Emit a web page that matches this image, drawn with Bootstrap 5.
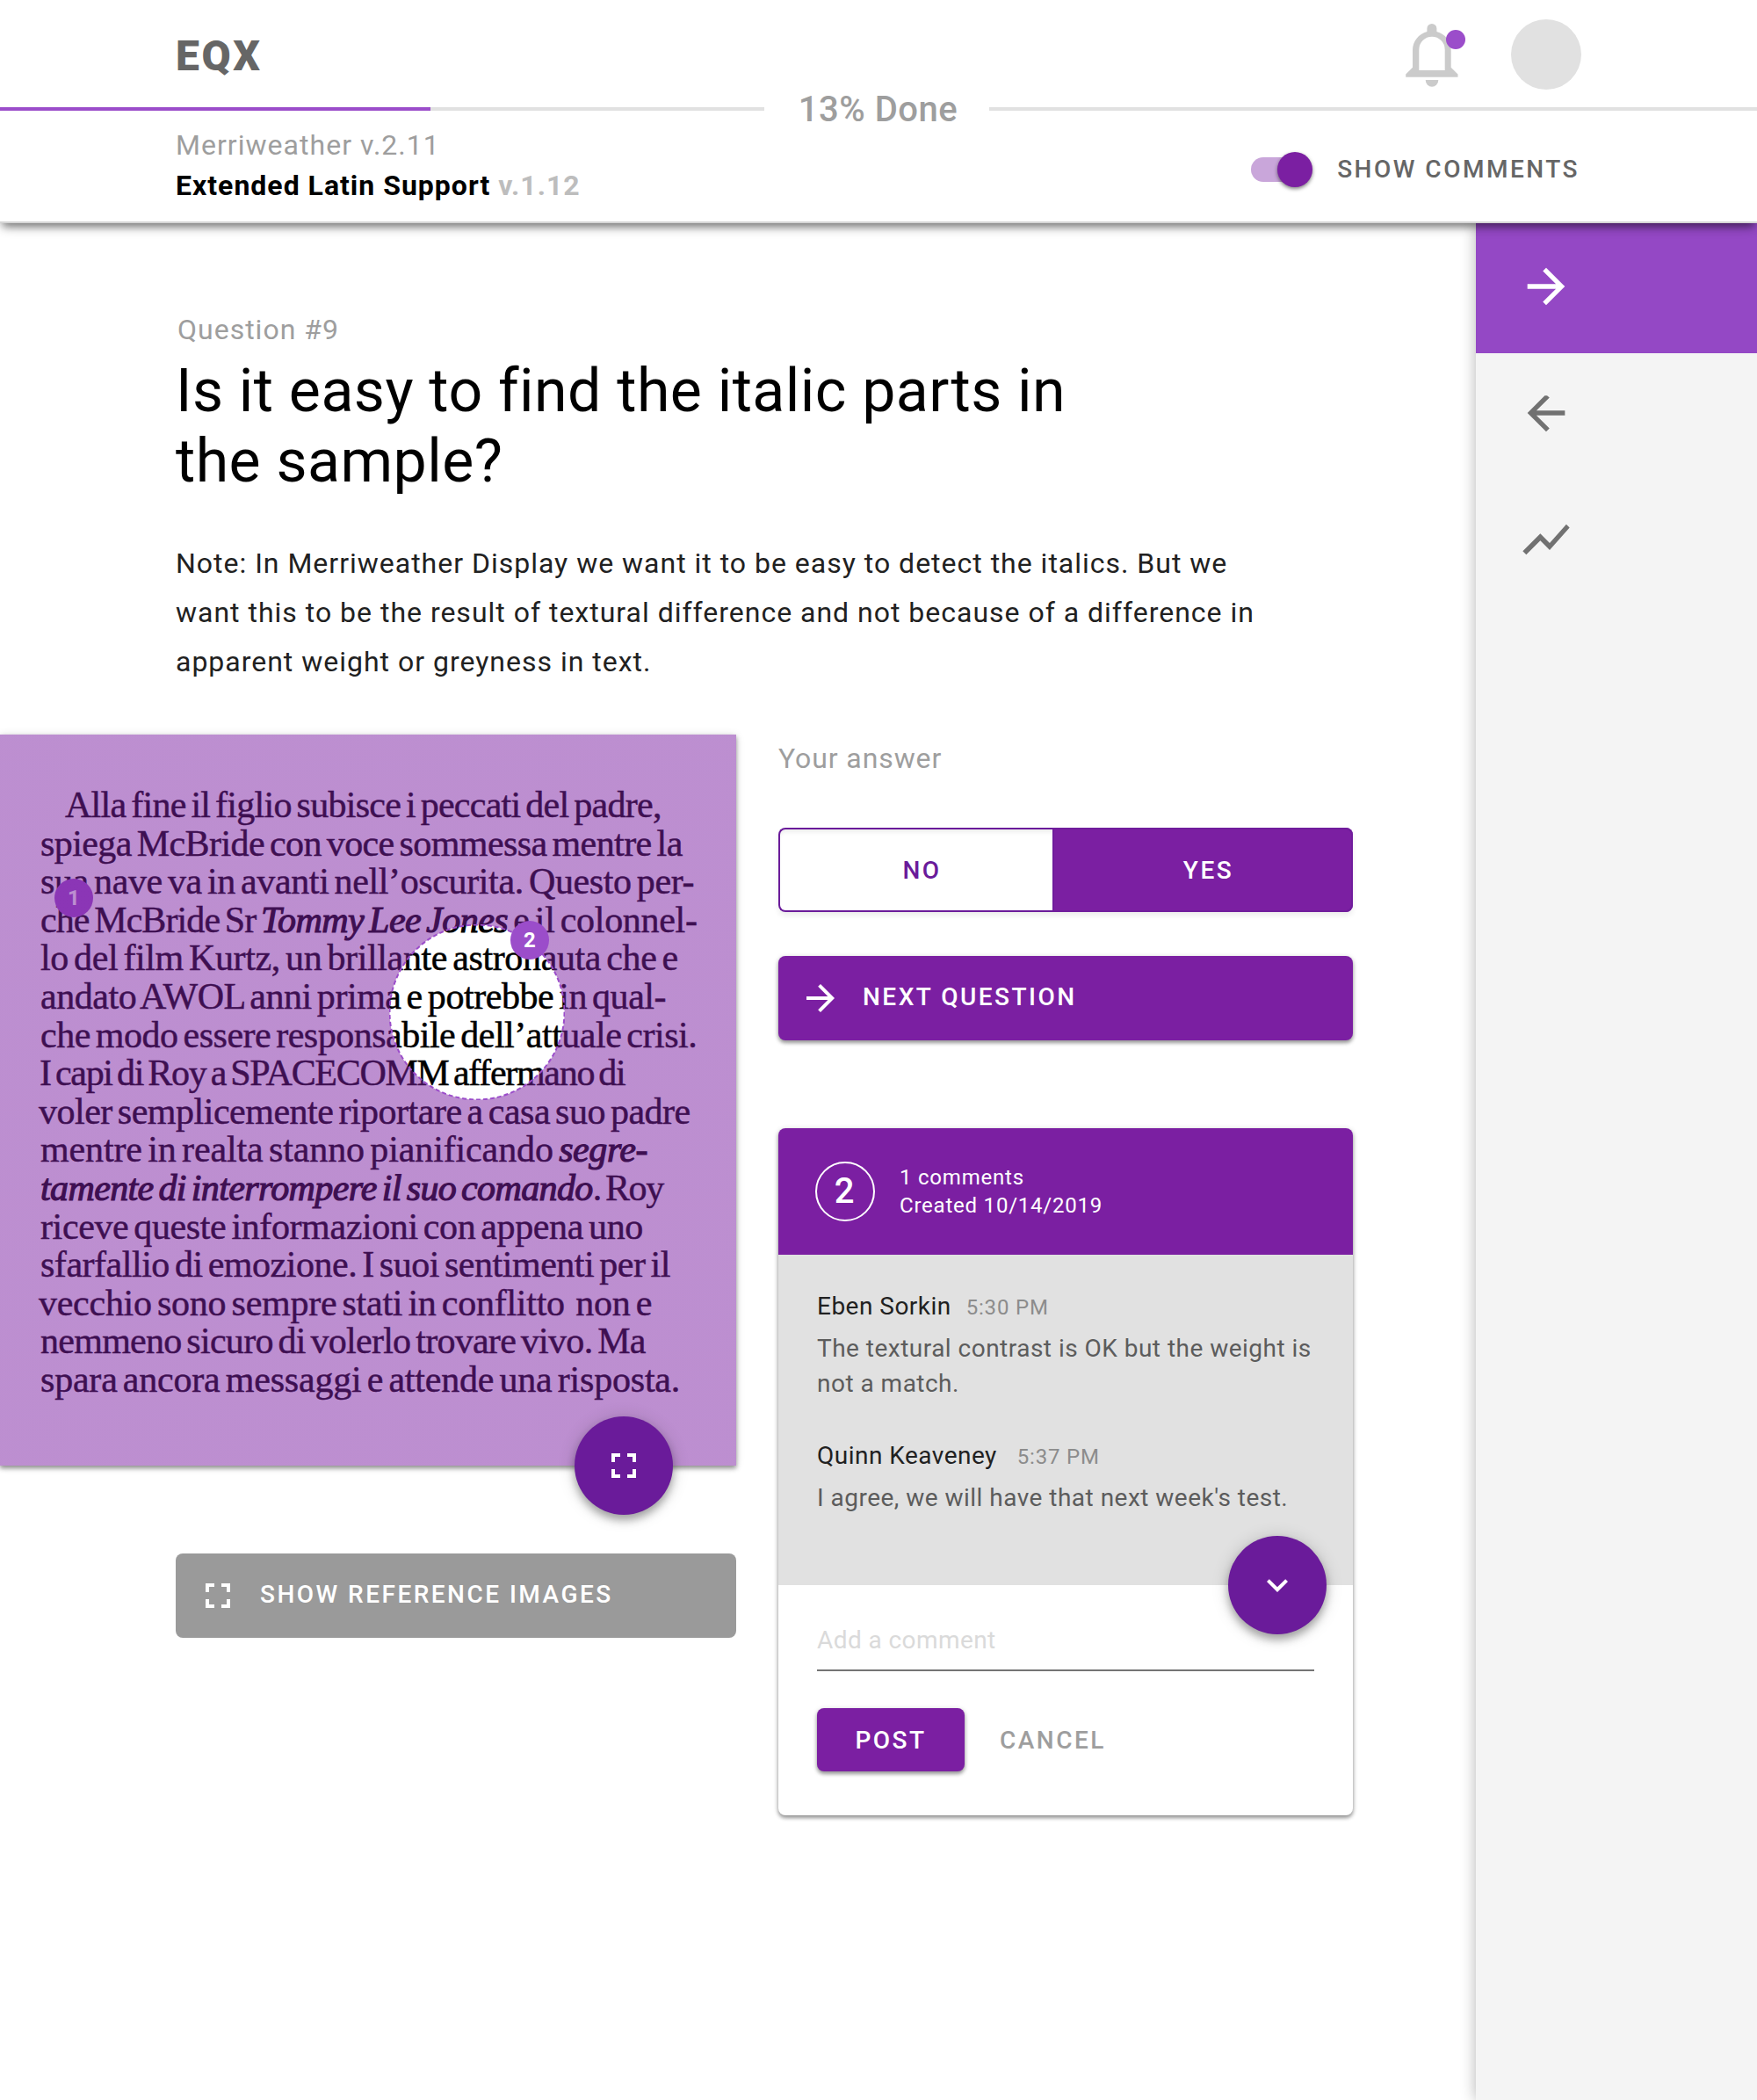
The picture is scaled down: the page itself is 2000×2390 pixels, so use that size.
<!DOCTYPE html>
<html lang="en">
<head>
<meta charset="utf-8">
<meta name="viewport" content="width=device-width, initial-scale=1">
<title>EQX</title>
<link href="https://cdn.jsdelivr.net/npm/bootstrap@5.3.0/dist/css/bootstrap.min.css" rel="stylesheet">
<style>
  :root { --plum: #7b1fa2; --plum-deep: #6a1b9a; --violet: #9b4dca; --violet-nav: #9448c5; --grey-text: #9e9e9e; }
  body { font-family: Roboto, "Liberation Sans", sans-serif; font-size: 32px; letter-spacing: .99px; line-height: 1.5; color: #212121; background: #fff; }
  svg { display: block; flex: none; }

  /* Header */
  .app-header { height: 254px; border-bottom: 2px solid #d6d6d6; z-index: 5; box-shadow: 0 7px 9px -3px rgba(0,0,0,.42), 0 3px 16px -3px rgba(0,0,0,.3); }
  .brand-bar { height: 122px; padding: 2px 200px 0 200px; }
  .brand-name { font-size: 48px; font-weight: 900; letter-spacing: 2.6px; color: #666; padding-top: 3px; line-height: 60px; }
  .avatar { width: 80px; height: 80px; background: #e1e1e1; }
  .brand-tools { gap: 60px; }
  .brand-tools svg { margin-top: 2px; }
  .done-row { height: 4px; }
  .done-track { height: 4px; border-radius: 0; background: #e1e1e1; width: 870px; }
  .done-track .progress-bar { background: var(--violet); width: 490px; }
  .done-track.rest { width: 874px; }
  .done-label { width: 256px; padding: 2px 0 0 3px; font-size: 40px; font-weight: 500; letter-spacing: .5px; color: var(--grey-text); }
  .project-bar { padding: 16px 202px 0 200px; line-height: 46px; }
  .project-font { color: var(--grey-text); letter-spacing: 1.03px; }
  .project-title { color: #000; font-weight: 700; letter-spacing: 1px; }
  .project-title span { color: #bdbdbd; }
  .comments-toggle { height: 46px; margin-top: 28px; gap: 26px; font-size: 28px; font-weight: 500; letter-spacing: 2.5px; color: #666; }
  .toggle-track { width: 68px; height: 28px; border-radius: 14px; background: #c9a6da; }
  .toggle-thumb { width: 40px; height: 40px; right: -2px; top: -6px; background: var(--plum); box-shadow: 0 2px 4px rgba(0,0,0,.5); }

  /* Main column */
  .stage { width: 1680px; padding-top: 97px; }
  .q-head { padding-left: 200px; }
  .q-number { color: var(--grey-text); padding-left: 2px; letter-spacing: 1px; }
  .q-title { font-size: 68px; line-height: 80px; font-weight: 400; letter-spacing: .46px; color: #000; margin: 6px 0 48px; }
  .q-note { line-height: 56px; margin-bottom: 55px; }
  .work-cols { gap: 48px; }
  .col-sample { width: 838px; }
  .col-answer { width: 654px; padding-top: 3px; }

  /* Sample with annotations */
  .sample { height: 832px; box-shadow: 0 3px 5px rgba(0,0,0,.4), 0 1px 10px rgba(0,0,0,.12); background: #fff; }
  .passage { padding: 59px 0 0 46px; font-family: "Liberation Serif", serif; font-size: 42px; line-height: 43.6px; word-spacing: -4px; color: #000; -webkit-text-stroke: .5px #000; }
  .passage div { white-space: pre; letter-spacing: -.37px; }
  .passage em { -webkit-text-stroke-width: 1.2px; }
  .passage .p1 { margin-left: 28px; letter-spacing: -.72px; }
  .passage .p2 { letter-spacing: -.58px; }
  .passage .p4 { letter-spacing: -.9px; }
  .passage .p4 em { letter-spacing: -.53px; }
  .passage .p4 span { letter-spacing: -.3px; }
  .passage .p6 { letter-spacing: -.45px; }
  .passage .p7 { letter-spacing: -.49px; }
  .passage .p8 { margin-left: -1px; letter-spacing: -1.28px; }
  .passage .p9 { margin-left: -2px; letter-spacing: -.49px; }
  .passage .p10 { letter-spacing: -.12px; }
  .passage .p10 em { letter-spacing: -.4px; }
  .passage .p11 { letter-spacing: -1.4px; }
  .passage .p11 em { letter-spacing: -.62px; }
  .passage .p12 { letter-spacing: -.39px; }
  .passage .p13 { letter-spacing: -.47px; }
  .passage .p14 { margin-left: -2px; letter-spacing: -.26px; }
  .passage .p15 { letter-spacing: -.72px; }
  .passage .p16 { letter-spacing: -.21px; }
  .tint { inset: 0; background: radial-gradient(circle at 543px 316px, transparent 99px, rgba(123,31,162,.5) 100px); }
  .lens { left: 443px; top: 216px; }
  .pin { width: 44px; height: 44px; background: var(--violet); color: #fff; font-size: 24px; font-weight: 700; letter-spacing: 0; }
  .pin-1 { left: 62px; top: 164px; }
  .pin-2 { left: 581px; top: 212px; }
  .fab { width: 112px; height: 112px; bottom: -56px; background: var(--plum-deep); box-shadow: 0 6px 10px rgba(0,0,0,.3), 0 2px 20px rgba(0,0,0,.16); border: 0; }
  .fab-sample { left: 654px; }
  .fab-thread { right: 30px; z-index: 2; }

  /* Buttons */
  .btn { --bs-btn-border-width: 0; --bs-btn-border-radius: 8px; font-size: 28px; font-weight: 500; letter-spacing: 2.48px; line-height: 40px; }
  .btn-wide { height: 96px; padding: 0 24px; gap: 24px; }
  .btn-wide span { padding-bottom: 3px; }
  .btn-plum, .btn-plum:hover { background: var(--plum); color: #fff; box-shadow: 0 3px 4px rgba(0,0,0,.36), 0 1px 6px rgba(0,0,0,.14); }
  .btn-reference { background: #9a9a9a; color: #fff; margin: 100px 0 0 200px; width: 638px; }
  .answer-label { color: var(--grey-text); letter-spacing: .9px; margin-bottom: 55px; }
  .answer-group { height: 96px; border-radius: 8px; margin-bottom: 50px; box-shadow: 0 4px 6px rgba(0,0,0,.08); }
  .answer-group .btn { padding: 2px 0 0 13px; margin: 0 !important; flex: none; }
  .answer-no { width: 312px; color: var(--plum-deep); background: #fff; border: 2px solid var(--plum-deep); border-right: 0; box-shadow: inset 0 5px 5px -2px rgba(0,0,0,.07); }
  .answer-yes { width: 342px; color: #fff; background: var(--plum); box-shadow: inset 0 0 0 2px #701c9c; }

  /* Comment thread */
  .thread { margin-top: 100px; border: 0; border-radius: 8px; letter-spacing: .48px; font-size: 28px; line-height: 40px; box-shadow: 0 3px 4px rgba(0,0,0,.36), 0 1px 6px rgba(0,0,0,.16); }
  .thread-head { height: 144px; padding: 0 0 0 42px; gap: 28px; border: 0; border-radius: 8px 8px 0 0 !important; background: var(--plum); color: #fff; font-size: 24px; line-height: 32px; letter-spacing: .78px; }
  .thread-count { width: 68px; height: 68px; border: 2px solid #fff; font-size: 40px; font-weight: 500; letter-spacing: 0; padding-right: 2px; }
  .thread-list { height: 376px; padding: 39px 44px 0 44px; background: #e1e1e1; color: #5c5c5c; }
  .thread-item { margin-bottom: 42px; }
  .thread-who { color: #212121; margin-bottom: 7px; gap: 17px; }
  .thread-who.spaced { gap: 23px; }
  .thread-who time { font-size: 24px; letter-spacing: .8px; color: #8c8c8c; }
  .thread-reply { padding: 40px 44px 50px; }
  .reply-input, .reply-input:focus { height: 58px; padding: 0 0 12px; border: 0; border-bottom: 2px solid #757575; border-radius: 0; font-size: 28px; letter-spacing: .42px; background: transparent; box-shadow: none; }
  .reply-input::placeholder { color: #dadada; }
  .reply-actions { margin-top: 42px; gap: 40px; }
  .btn-post { width: 168px; height: 72px; padding-top: 8px; }
  .btn-cancel { color: var(--grey-text); padding: 2px 0 0; }

  /* Side navigation */
  .side-nav { width: 320px; background: #f4f4f4; box-shadow: 0 0 16px rgba(0,0,0,.3); }
  .side-nav .nav-link { height: 144px; padding: 36px 0 0 48px; color: #717171; }
  .side-nav .nav-link.active { height: 148px; padding-top: 40px; background: var(--violet-nav); color: #fff; }
</style>
</head>
<body class="d-flex flex-column min-vh-100">

<header class="app-header bg-white position-relative">
  <div class="brand-bar d-flex align-items-center justify-content-between">
    <div class="brand-name">EQX</div>
    <div class="brand-tools d-flex align-items-center">
      <svg width="60" height="72" viewBox="0 0 60 72" overflow="visible" aria-label="Notifications">
        <g fill="#cbcbcb">
          <path fill-rule="evenodd" d="M24.4 9V5.4a5.5 5.5 0 0 1 11 0V9C45 11.500 51.700 20 51.700 30V49.700L59.500 57.500V60.700H.2V57.500L8 49.700V30C8 20 15 11.500 24.400 9ZM15.300 29.500V53H44.700V29.500a14.700 14.700 0 0 0-29.400 0Z"/>
          <path d="M22.700 64H37.300A7.300 7.700 0 0 1 22.700 64Z"/>
        </g>
        <circle cx="57" cy="18" r="11" fill="#9b4dca"/>
      </svg>
      <div class="avatar rounded-circle"></div>
    </div>
  </div>
  <div class="done-row d-flex align-items-center">
    <div class="progress done-track"><div class="progress-bar"></div></div>
    <div class="done-label text-center lh-1">13% Done</div>
    <div class="done-track rest"></div>
  </div>
  <div class="project-bar d-flex justify-content-between">
    <div>
      <div class="project-font">Merriweather v.2.11</div>
      <div class="project-title">Extended Latin Support <span>v.1.12</span></div>
    </div>
    <div class="comments-toggle d-flex align-items-center">
      <div class="toggle-track position-relative me-1"><div class="toggle-thumb rounded-circle position-absolute"></div></div>
      <span>SHOW COMMENTS</span>
    </div>
  </div>
</header>

<div class="d-flex flex-grow-1">
  <main class="stage">
    <div class="q-head">
      <div class="q-number">Question #9</div>
      <h1 class="q-title">Is it easy to find the italic parts in<br>the sample?</h1>
      <p class="q-note">Note: In Merriweather Display we want it to be easy to detect the italics. But we<br>want this to be the result of textural difference and not because of a difference in<br>apparent weight or greyness in text.</p>
    </div>

    <div class="work-cols d-flex align-items-start">
      <section class="col-sample">
        <div class="sample position-relative">
          <div class="passage" lang="it">
            <div class="p1">Alla fine il figlio subisce i peccati del padre,</div>
            <div class="p2">spiega McBride con voce sommessa mentre la</div>
            <div class="p3">sua nave va in avanti nell’oscurita. Questo per-</div>
            <div class="p4">che McBride Sr <em>Tommy Lee Jones</em><span> e il colonnel-</span></div>
            <div class="p5">lo del film Kurtz, un brillante astronauta che e</div>
            <div class="p6">andato AWOL anni prima e potrebbe in qual-</div>
            <div class="p7">che modo essere responsabile dell’attuale crisi.</div>
            <div class="p8">I capi di Roy a SPACECOMM affermano di</div>
            <div class="p9">voler semplicemente riportare a casa suo padre</div>
            <div class="p10">mentre in realta stanno pianificando <em>segre-</em></div>
            <div class="p11"><em>tamente di interrompere il suo comando</em>. Roy</div>
            <div class="p12">riceve queste informazioni con appena uno</div>
            <div class="p13">sfarfallio di emozione. I suoi sentimenti per il</div>
            <div class="p14">vecchio sono sempre stati in conflitto  non e</div>
            <div class="p15">nemmeno sicuro di volerlo trovare vivo. Ma</div>
            <div class="p16">spara ancora messaggi e attende una risposta.</div>
          </div>
          <div class="pin pin-1 rounded-circle position-absolute d-flex align-items-center justify-content-center">1</div>
          <div class="tint position-absolute"></div>
          <svg class="lens position-absolute" width="200" height="200"><circle cx="100" cy="100" r="99.500" fill="none" stroke="#9b4dca" stroke-width="2" stroke-dasharray="5 3"/></svg>
          <div class="pin pin-2 rounded-circle position-absolute d-flex align-items-center justify-content-center">2</div>
          <button class="fab fab-sample rounded-circle position-absolute d-flex align-items-center justify-content-center" aria-label="Full screen">
            <svg width="48" height="48" viewBox="0 0 24 24" fill="#fff"><path d="M7 14H5v5h5v-2H7v-3zm-2-4h2V7h3V5H5v5zm12 7h-3v2h5v-5h-2v3zM14 5v2h3v3h2V5h-5z"/></svg>
          </button>
        </div>
        <button class="btn btn-wide btn-reference d-flex align-items-center">
          <svg width="48" height="48" viewBox="0 0 24 24" fill="#fff"><path d="M7 14H5v5h5v-2H7v-3zm-2-4h2V7h3V5H5v5zm12 7h-3v2h5v-5h-2v3zM14 5v2h3v3h2V5h-5z"/></svg>
          <span>SHOW REFERENCE IMAGES</span>
        </button>
      </section>

      <section class="col-answer">
        <div class="answer-label">Your answer</div>
        <div class="btn-group answer-group d-flex">
          <button class="btn answer-no">NO</button>
          <button class="btn answer-yes">YES</button>
        </div>
        <button class="btn btn-wide btn-plum w-100 d-flex align-items-center">
          <svg width="48" height="48" viewBox="0 0 24 24" fill="#fff"><path d="M12 4l-1.410 1.410L16.170 11H4v2h12.170l-5.580 5.590L12 20l8-8z"/></svg>
          <span>NEXT QUESTION</span>
        </button>

        <div class="card thread">
          <div class="card-header thread-head d-flex align-items-center">
            <div class="thread-count rounded-circle d-flex align-items-center justify-content-center">2</div>
            <div>1 comments<br>Created 10/14/2019</div>
          </div>
          <div class="thread-list position-relative">
            <div class="thread-item">
              <div class="thread-who d-flex align-items-baseline"><span>Eben Sorkin</span><time>5:30 PM</time></div>
              <div>The textural contrast is OK but the weight is<br>not a match.</div>
            </div>
            <div class="thread-item">
              <div class="thread-who spaced d-flex align-items-baseline"><span>Quinn Keaveney</span><time>5:37 PM</time></div>
              <div>I agree, we will have that next week's test.</div>
            </div>
            <button class="fab fab-thread rounded-circle position-absolute d-flex align-items-center justify-content-center" aria-label="Expand">
              <svg width="48" height="48" viewBox="0 0 24 24" fill="#fff"><path d="M16.590 8.590L12 13.170 7.410 8.590 6 10l6 6 6-6z"/></svg>
            </button>
          </div>
          <div class="thread-reply">
            <input class="form-control reply-input" type="text" placeholder="Add a comment">
            <div class="reply-actions d-flex align-items-center">
              <button class="btn btn-plum btn-post">POST</button>
              <button class="btn btn-cancel">CANCEL</button>
            </div>
          </div>
        </div>
      </section>
    </div>
  </main>

  <nav class="side-nav nav flex-column flex-nowrap">
    <a class="nav-link active" href="#" aria-label="Next"><svg width="64" height="64" viewBox="0 0 24 24" fill="currentColor"><path d="M12 4l-1.410 1.410L16.170 11H4v2h12.170l-5.580 5.590L12 20l8-8z"/></svg></a>
    <a class="nav-link" href="#" aria-label="Previous"><svg width="64" height="64" viewBox="0 0 24 24" fill="currentColor"><path d="M20 11H7.830l5.590-5.590L12.400 4.600H11.400L4 12l8 8 1.410-1.410L7.830 13H20v-2z"/></svg></a>
    <a class="nav-link" href="#" aria-label="Statistics"><svg width="64" height="64" viewBox="0 0 24 24" fill="currentColor"><path d="M3.500 18.490l6-6.010 4 4L22 6.920l-1.410-1.410-7.090 7.970-4-4L2 16.990z"/></svg></a>
  </nav>
</div>

<script src="https://cdn.jsdelivr.net/npm/bootstrap@5.3.0/dist/js/bootstrap.bundle.min.js"></script>
</body>
</html>
